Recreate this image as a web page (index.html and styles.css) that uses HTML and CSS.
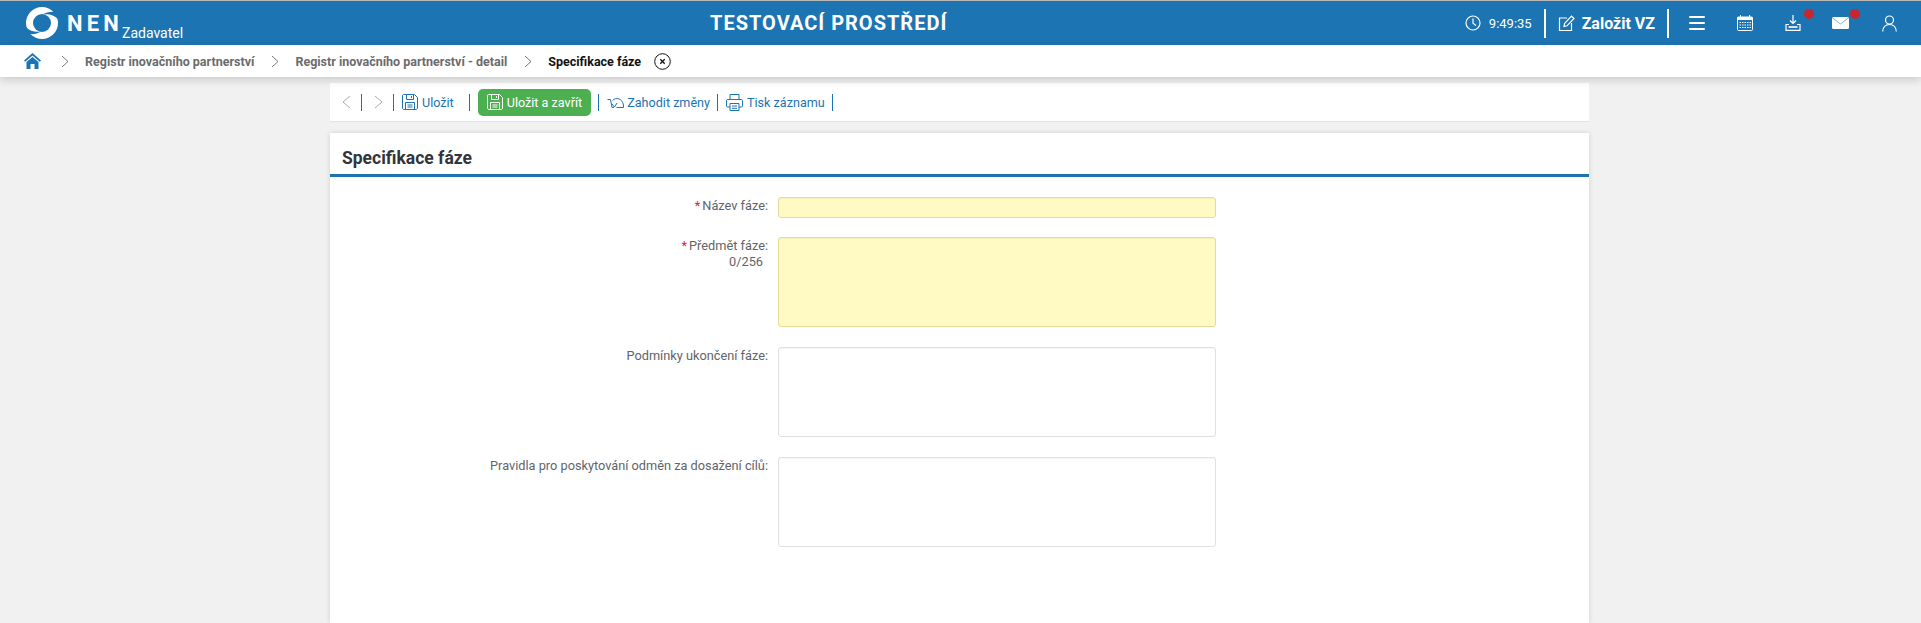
FILE: index.html
```html
<!DOCTYPE html>
<html lang="cs">

<head>
    <title>NEN - Specifikace fáze</title>
    <meta charset="UTF-8">
    <link rel="stylesheet" href="styles.css">
</head>

<body>
    <header class="nen-header">
        <div class="nen-brand">
            <svg class="nen-logo" width="32" height="32" viewBox="0 0 32 32">
                <circle cx="16" cy="16" r="16" fill="#fff" />
                <circle cx="16" cy="16" r="9" fill="#1c74b2" />
                <path fill="#1c74b2" d="M17 7.500C22 6.500 28 7.500 32 12V4L28.500 5C24 4.500 20 5.500 17 7.500Z" />
                <path fill="#1c74b2" transform="rotate(180 16 16)" d="M17 7.500C22 6.500 28 7.500 32 12V4L28.500 5C24 4.500 20 5.500 17 7.500Z" />
            </svg>
            <span class="nen-name">NEN</span>
            <span class="nen-role">Zadavatel</span>
        </div>
        <div class="nen-env">TESTOVACÍ PROSTŘEDÍ</div>
        <div class="nen-tools">
            <svg class="nen-clock" width="16" height="16" viewBox="0 0 16 16" fill="none" stroke="#fff" stroke-width="1.200">
                <circle cx="8" cy="8" r="7" />
                <path d="M8 3.500V8.300L11 10.500" />
            </svg>
            <span class="nen-time">9:49:35</span>
            <span class="nen-sep"></span>
            <a class="nen-new">
                <svg width="17" height="17" viewBox="0 0 17 17" fill="none" stroke="#fff" stroke-width="1.200">
                    <path d="M9 3H1.500V15.500H13.500V8" />
                    <path d="M6 11.500L6.500 8.500L13.500 1.200L16 3.500L9 10.800Z" />
                </svg>
                Založit VZ
            </a>
            <span class="nen-sep"></span>
            <div class="nen-icons">
                <a class="nen-icon">
                    <svg width="16" height="14" viewBox="0 0 16 14" fill="#fff">
                        <rect y="0" width="16" height="2" rx="1" />
                        <rect y="6" width="16" height="2" rx="1" />
                        <rect y="12" width="16" height="2" rx="1" />
                    </svg>
                </a>
                <a class="nen-icon">
                    <svg width="16" height="16" viewBox="0 0 16 16">
                        <rect x="0.500" y="2" width="15" height="13.500" rx="1" fill="none" stroke="#fff" />
                        <rect x="0.500" y="2" width="15" height="3" fill="#fff" />
                        <path stroke="#fff" d="M3.500 0V3M12.500 0V3" />
                        <path stroke="#fff" stroke-dasharray="1.500 1" d="M2.500 7.500H14M2.500 10H14M2.500 12.500H14" />
                    </svg>
                </a>
                <a class="nen-icon">
                    <svg width="16" height="16" viewBox="0 0 16 16" fill="none" stroke="#fff" stroke-width="1.200">
                        <path d="M8 0V8M5 5.500L8 8.500L11 5.500" />
                        <path d="M4 9.500H1V15.300H15V9.500H12" />
                        <path stroke-width="1.600" d="M3.500 12H12.500" />
                    </svg>
                    <span class="nen-dot nen-dot-down"></span>
                </a>
                <a class="nen-icon nen-icon-mail">
                    <svg width="17" height="12" viewBox="0 0 17 12">
                        <rect width="17" height="12" rx="1.500" fill="#fff" />
                        <path fill="none" stroke="#7fb2d6" d="M0.500 0.800L8.500 7L16.500 0.800" />
                    </svg>
                    <span class="nen-dot nen-dot-mail"></span>
                </a>
                <a class="nen-icon">
                    <svg width="15" height="17" viewBox="0 0 15 17" fill="none" stroke="#fff" stroke-width="1.200">
                        <circle cx="7.500" cy="5" r="4" />
                        <path d="M0.700 16.500C1 12 3.500 9.500 7.500 9.500C11.500 9.500 14 12 14.300 16.500" />
                    </svg>
                </a>
            </div>
        </div>
    </header>

    <nav class="nen-crumbs">
        <svg class="crumb-home" width="17" height="16" viewBox="0 0 17 16" fill="#1c74b2">
            <path d="M8.500 0L17 7.500L15.800 8.800L8.500 2.500L1.200 8.800L0 7.500Z" />
            <path d="M8.500 4L14.500 9V16H10.500V11H6.500V16H2.500V9Z" />
        </svg>
        <svg class="crumb-arrow" width="8" height="13" viewBox="0 0 8 13" fill="none" stroke="#777">
            <path d="M1 1L7 6.500L1 12" />
        </svg>
        <a class="crumb">Registr inovačního partnerství</a>
        <svg class="crumb-arrow" width="8" height="13" viewBox="0 0 8 13" fill="none" stroke="#777">
            <path d="M1 1L7 6.500L1 12" />
        </svg>
        <a class="crumb">Registr inovačního partnerství - detail</a>
        <svg class="crumb-arrow" width="8" height="13" viewBox="0 0 8 13" fill="none" stroke="#777">
            <path d="M1 1L7 6.500L1 12" />
        </svg>
        <span class="crumb crumb-active">Specifikace fáze</span>
        <svg class="crumb-close" width="17" height="17" viewBox="0 0 17 17" fill="none" stroke="#111">
            <circle cx="8.500" cy="8.500" r="7.800" />
            <path stroke-width="1.300" d="M6.300 6.300L10.700 10.700M10.700 6.300L6.300 10.700" />
        </svg>
    </nav>

    <main class="nen-page">
        <div class="nen-toolbar">
            <svg class="tb-arrow" width="9" height="14" viewBox="0 0 9 14" fill="none" stroke="#aaa">
                <path d="M8 1L1 7L8 13" />
            </svg>
            <span class="tb-sep tb-sep-prev"></span>
            <svg class="tb-arrow" width="9" height="14" viewBox="0 0 9 14" fill="none" stroke="#aaa">
                <path d="M1 1L8 7L1 13" />
            </svg>
            <span class="tb-sep tb-sep-next"></span>
            <a class="tb-link">
                <svg width="16" height="16" viewBox="0 0 16 16" fill="none" stroke="currentColor">
                    <path d="M1.500 0.500H12.500L15.500 3.500V14C15.500 14.800 14.800 15.500 14 15.500H2C1.200 15.500 0.500 14.800 0.500 14V1.500C0.500 1 1 0.500 1.500 0.500Z" />
                    <path d="M4.500 0.500V5.500H11.500V0.500M9.500 2V4" />
                    <path d="M3.500 15.500V8.500H12.500V15.500M5.500 11H10.500M5.500 13H10.500" />
                </svg>
                Uložit
            </a>
            <span class="tb-sep tb-sep-save"></span>
            <a class="tb-primary">
                <svg width="16" height="16" viewBox="0 0 16 16" fill="none" stroke="currentColor">
                    <path d="M1.500 0.500H12.500L15.500 3.500V14C15.500 14.800 14.800 15.500 14 15.500H2C1.200 15.500 0.500 14.800 0.500 14V1.500C0.500 1 1 0.500 1.500 0.500Z" />
                    <path d="M4.500 0.500V5.500H11.500V0.500M9.500 2V4" />
                    <path d="M3.500 15.500V8.500H12.500V15.500M5.500 11H10.500M5.500 13H10.500" />
                </svg>
                Uložit a zavřít
            </a>
            <span class="tb-sep"></span>
            <a class="tb-link tb-discard">
                <svg width="17" height="11" viewBox="0 0 17 11" fill="none" stroke="currentColor">
                    <path d="M0.500 2.500H3.500L5 10.500H7" />
                    <path d="M5.500 3.500C9 0 15 1 16.500 8V10.500H9.500" />
                    <path d="M4.500 6.500L7.500 10L10 6" />
                </svg>
                Zahodit změny
            </a>
            <span class="tb-sep"></span>
            <a class="tb-link">
                <svg width="17" height="17" viewBox="0 0 17 17" fill="none" stroke="currentColor">
                    <path d="M4 5V0.500H13V5" />
                    <path d="M4 13H1.500C1 13 0.500 12.500 0.500 12V6.500C0.500 6 1 5.500 1.500 5.500H15.500C16 5.500 16.500 6 16.500 6.500V12C16.500 12.500 16 13 15.500 13H13" />
                    <path d="M4 9.500H13V16.500H4ZM6 12H11M6 14.300H11" />
                </svg>
                Tisk záznamu
            </a>
            <span class="tb-sep"></span>
        </div>

        <section class="nen-card">
            <h2 class="card-title">Specifikace fáze</h2>
            <form class="nen-form">
                <div class="form-row">
                    <label class="form-label"><span class="req">*</span>Název fáze:</label>
                    <input class="form-input form-required" type="text">
                </div>
                <div class="form-row">
                    <div class="form-label">
                        <label><span class="req">*</span>Předmět fáze:</label>
                        <div class="form-count">0/256</div>
                    </div>
                    <textarea class="form-area form-required"></textarea>
                </div>
                <div class="form-row">
                    <label class="form-label">Podmínky ukončení fáze:</label>
                    <textarea class="form-area"></textarea>
                </div>
                <div class="form-row">
                    <label class="form-label">Pravidla pro poskytování odměn za dosažení cílů:</label>
                    <textarea class="form-area"></textarea>
                </div>
            </form>
        </section>
    </main>
</body>

</html>
```

FILE: styles.css
```css
* {
    box-sizing: border-box;
    font-family: Roboto, sans-serif;
}

html,
body {
    height: 100%;
}

body {
    margin: 0;
    background-color: #f1f1f1;
    overflow: hidden;
    display: flex;
    flex-direction: column;
}

/* header */

.nen-header {
    height: 45px;
    flex-shrink: 0;
    border-top: 1px solid #b9b9b9;
    background-color: #1c74b2;
    color: #ffffff;
    display: grid;
    grid-template-columns: 710px auto 1fr;
    align-items: center;
}

.nen-brand {
    display: flex;
    align-items: center;
    padding-left: 26px;
}

.nen-name {
    margin-left: 9px;
    font-size: 22px;
    font-weight: 700;
    letter-spacing: 4.2px;
}

.nen-role {
    margin-left: -1px;
    padding-top: 20px;
    font-size: 14px;
    line-height: 16px;
}

.nen-env {
    font-size: 20px;
    font-weight: 700;
    letter-spacing: 1px;
}

.nen-tools {
    display: flex;
    align-items: center;
    justify-content: flex-end;
    padding-right: 24px;
}

.nen-time {
    margin-left: 8px;
    font-size: 13px;
}

.nen-sep {
    width: 2px;
    height: 29px;
    margin: 0 12px;
    background-color: #ffffff;
}

.nen-new {
    display: flex;
    align-items: center;
    gap: 7px;
    font-size: 16px;
    font-weight: 700;
}

.nen-icons {
    display: flex;
    align-items: center;
    gap: 32px;
    margin-left: 8px;
}

.nen-icon {
    position: relative;
    display: flex;
}

.nen-icon-mail {
    margin: 0 1px 0 -1px;
}

.nen-dot {
    position: absolute;
    width: 10px;
    height: 10px;
    border-radius: 50%;
    background-color: #c8262c;
}

.nen-dot-down {
    top: -6px;
    right: -13px;
}

.nen-dot-mail {
    top: -8px;
    right: -11px;
}

/* breadcrumb */

.nen-crumbs {
    height: 32px;
    flex-shrink: 0;
    background-color: #ffffff;
    box-shadow: 0 3px 8px rgba(0, 0, 0, 0.16);
    display: flex;
    align-items: center;
    padding-left: 24px;
    position: relative;
}

.crumb {
    font-size: 12.5px;
    font-weight: 700;
    color: #6b6b6b;
}

.crumb-active {
    color: #111111;
}

.crumb-arrow {
    margin: 0 16px 0 17px;
}

.crumb-home + .crumb-arrow {
    margin-left: 20px;
}

.crumb-close {
    margin-left: 13px;
}

/* page column */

.nen-page {
    width: 1259px;
    flex: 1;
    margin: 6px 0 0 330px;
    display: flex;
    flex-direction: column;
    gap: 11px;
}

.nen-toolbar {
    height: 39px;
    flex-shrink: 0;
    background-color: #ffffff;
    border-bottom: 1px solid #e2e2e2;
    display: flex;
    align-items: center;
    padding-left: 12px;
    font-size: 12.6px;
}

.tb-sep {
    width: 1px;
    height: 17px;
    margin: 0 8px 0 7px;
    background-color: #1c74b2;
}

.tb-sep-prev {
    margin: 0 12px 0 10px;
}

.tb-sep-next {
    margin: 0 8px 0 10px;
}

.tb-sep-save {
    margin: 0 8px 0 15px;
}

.tb-arrow {
    flex-shrink: 0;
}

.tb-link {
    display: flex;
    align-items: center;
    gap: 4px;
    color: #1c74b2;
}

.tb-discard {
    gap: 3px;
}

.tb-primary {
    display: flex;
    align-items: center;
    gap: 4px;
    height: 27px;
    padding: 0 9px;
    border-radius: 5px;
    background-color: #4caf50;
    color: #ffffff;
}

/* card with the form */

.nen-card {
    flex: 1;
    background-color: #ffffff;
    box-shadow: 0 0 5px rgba(0, 0, 0, 0.14);
}

.card-title {
    margin: 0;
    height: 44px;
    padding: 15px 12px 0;
    border-bottom: 3px solid #1c74b2;
    font-size: 17.5px;
    line-height: 21px;
    font-weight: 700;
    color: #30363c;
}

.nen-form {
    padding-top: 20px;
    display: flex;
    flex-direction: column;
    gap: 20px;
}

.form-row {
    display: flex;
    gap: 10px;
}

.form-label {
    width: 438px;
    flex-shrink: 0;
    text-align: right;
    font-size: 12.75px;
    line-height: 15px;
    color: #5f6469;
    padding-top: 1px;
}

.form-count {
    padding-right: 5px;
    margin-top: 1px;
}

.req {
    color: #d9262c;
    margin-right: 2px;
}

.form-input,
.form-area {
    display: block;
    width: 438px;
    border: 1px solid #e0e0e0;
    border-radius: 3px;
    background-color: #ffffff;
    box-shadow: inset 0 1px 1px rgba(0, 0, 0, 0.04);
    resize: none;
    outline: none;
    padding: 0;
    margin: 0;
}

.form-input {
    height: 21px;
    margin-bottom: -1px;
}

.form-area {
    height: 90px;
}

.form-required {
    background-color: #fff9c4;
    border-color: #e3dc9e;
}
```
